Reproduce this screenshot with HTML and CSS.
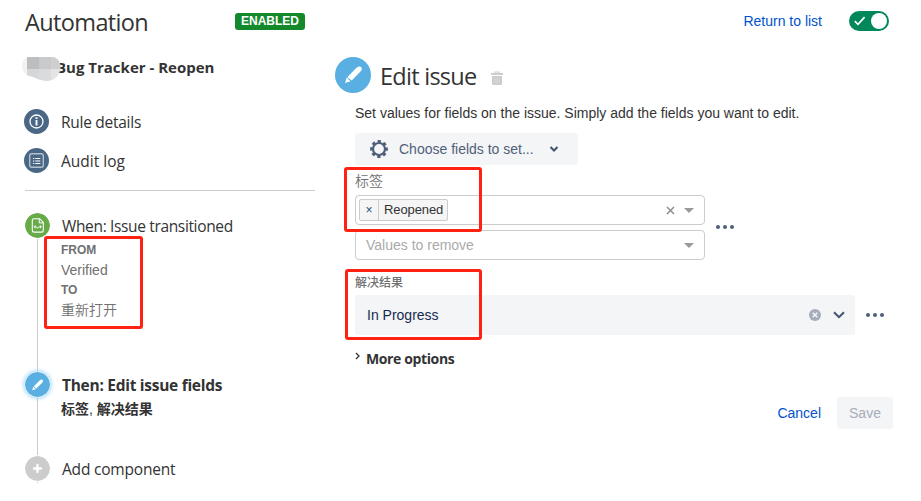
FILE: index.html
```html
<!DOCTYPE html>
<html lang="en">
<head>
<meta charset="utf-8">
<title>Automation</title>
<link rel="stylesheet" href="styles.css">
</head>
<body>
<div class="page">
  <header class="topbar">
    <h1 class="title">Automation</h1>
    <span class="badge">ENABLED</span>
    <a class="link return">Return to list</a>
    <span class="toggle">
      <svg width="14" height="12" viewBox="0 0 14 12"><path d="M1.8 6.2 5 9.3 11.6 2.2" fill="none" stroke="#fff" stroke-width="1.7"/></svg>
      <span class="knob"></span>
    </span>
  </header>
  <div class="columns">
    <aside class="sidebar">
      <div class="rule-name">
        <svg class="mosaic" width="39" height="25" viewBox="0 0 39 25">
          <clipPath id="blob"><path d="M6 0H31C36 1 39 5 38.500 12C37 20 31 24 25 24C17 24 14 20 7 19C2 17 0 13 0 9C0 5 2 1 6 0Z"/></clipPath>
          <g clip-path="url(#blob)"><path fill="#f4f2f1" d="M0 0h5v25H0z"/><path fill="#bdbec0" d="M5 0h12v12H5z"/><path fill="#c9cacb" d="M17 0h12v12H17z"/><path fill="#cfcfcf" d="M29 0h10v12H29z"/><path fill="#d5d6d8" d="M5 12h12v13H5z"/><path fill="#dadbdd" d="M17 12h12v13H17z"/><path fill="#e5e4e4" d="M29 12h10v13H29z"/></g>
        </svg>
        <span class="rule-text">Bug Tracker - Reopen</span>
      </div>
      <div class="nav">
        <div class="nav-item">
          <svg width="25" height="25" viewBox="0 0 25 25"><circle cx="12.500" cy="12.500" r="12.500" fill="#4a6785"/><circle cx="12.500" cy="12.500" r="6.500" fill="none" stroke="#fff" stroke-width="1.300"/><path d="M12.500 8.300v1.700M12.500 11v5.500" stroke="#fff" stroke-width="1.900"/></svg>
          <span class="t-rule">Rule details</span>
        </div>
        <div class="nav-item">
          <svg width="25" height="25" viewBox="0 0 25 25"><circle cx="12.500" cy="12.500" r="12.500" fill="#4a6785"/><rect x="5.700" y="5.700" width="13.600" height="13.600" rx="2" fill="none" stroke="#b5c1cd" stroke-width="1.400"/><path d="M9 10.500h1.300M9 13h1.300M9 15.500h1.300M11.300 10.500h5M11.300 13h5M11.300 15.500h5" stroke="#fff" stroke-width="1.100"/></svg>
          <span class="t-audit">Audit log</span>
        </div>
      </div>
      <div class="timeline">
        <div class="step step-when">
          <div class="rail"><svg class="node" width="25" height="25" viewBox="0 0 25 25"><circle cx="12.500" cy="12.500" r="12.500" fill="#67ab49"/><path d="M9 5.700h5.600l3.700 3.700v8a1.700 1.700 0 0 1-1.700 1.700H9a1.700 1.700 0 0 1-1.700-1.700v-10A1.700 1.700 0 0 1 9 5.700Z" fill="none" stroke="#fff" stroke-width="1.100"/><path d="M14.200 6v3.900H18" fill="none" stroke="#fff" stroke-width="1"/><path d="m8.600 13.800 2-1.700v3.400ZM16.900 13.800l-2-1.700v3.400Z" fill="#fff"/><path d="m10.500 13.800 1 .3.900 1.200.9-1.200 1.700-.3" fill="none" stroke="#fff" stroke-width=".9"/></svg></div>
          <div class="body">
            <div class="heading t-when">When: Issue transitioned</div>
            <div class="details"><b>FROM</b><span>Verified</span><b>TO</b><span class="cjk">重新打开</span></div>
          </div>
        </div>
        <div class="step step-then">
          <div class="rail"><svg class="node glow" width="25" height="25" viewBox="0 0 25 25"><circle cx="12.500" cy="12.500" r="12.500" fill="#59afe1"/><path d="m8.900 14.300 6-6c.9-.9 2-.9 2.700-.3s.5 1.700-.2 2.500l-6.300 6.300Z" fill="#fff"/><path d="m8.300 14.700-1.100 3.600 3.500-1Z" fill="#fff"/></svg></div>
          <div class="body">
            <div class="heading strong t-then">Then: Edit issue fields</div>
            <div class="fields"><b>标签</b>, <b>解决结果</b></div>
          </div>
        </div>
        <div class="step step-add">
          <div class="rail"><svg class="node" width="25" height="25" viewBox="0 0 25 25"><circle cx="12.500" cy="12.500" r="12.500" fill="#ccc"/><path d="M12.500 9v7M9 12.500h7" stroke="#fff" stroke-width="2.300" stroke-linecap="round"/></svg></div>
          <div class="body"><div class="heading t-add">Add component</div></div>
        </div>
      </div>
    </aside>
    <main class="main">
      <div class="edit-head">
        <svg width="36" height="36" viewBox="0 0 36 36"><circle cx="18" cy="18" r="18" fill="#59afe1"/><path d="m12.300 20.300 8.900-9.300c1.500-1.600 3.500-2 4.800-1s1 2.900-.3 4.300l-9 9.200Z" fill="#fff"/><path d="m11.600 20.400-1.500 5.500 5.400-1.600Z" fill="#fff"/></svg>
        <h2 class="t-edit">Edit issue</h2>
        <svg class="trash" width="12" height="14" viewBox="0 0 12 14"><path d="M3.500 2V.5h5V2H12v2H0V2Zm1 0h3v-.6h-3ZM1 5h10v7.500A1.500 1.500 0 0 1 9.500 14h-7A1.500 1.500 0 0 1 1 12.500Z" fill="#ccc" fill-rule="evenodd"/><path d="M4 6.500v6M6 6.500v6M8 6.500v6" stroke="#dedede" stroke-width=".7"/></svg>
      </div>
      <div class="form">
        <p class="intro">Set values for fields on the issue. Simply add the fields you want to edit.</p>
        <div class="choose">
          <svg width="18" height="18" viewBox="0 0 18 18"><circle cx="9" cy="9" r="7.500" fill="none" stroke="#505f79" stroke-width="2.800" stroke-dasharray="3.200 2.690" transform="rotate(-12 9 9)"/><circle cx="9" cy="9" r="6" fill="none" stroke="#505f79" stroke-width="2.200"/></svg>
          <span>Choose fields to set...</span>
          <svg class="chev" width="10" height="6" viewBox="0 0 10 6"><path d="m1.500 1 3.500 3.500L8.500 1" fill="none" stroke="#42526e" stroke-width="2"/></svg>
        </div>
        <div class="label cjk">标签</div>
        <div class="row labels-row">
          <div class="selects">
            <div class="select">
              <div class="tag"><span class="tag-x">×</span><span class="tag-name">Reopened</span></div>
              <svg class="clear" width="9" height="9" viewBox="0 0 9 9"><path d="m1 1 7 7M8 1 1 8" stroke="#8d8d8d" stroke-width="1.500"/></svg>
              <svg width="10" height="5" viewBox="0 0 10 5"><path d="M0 0h10L5 5Z" fill="#999"/></svg>
            </div>
            <div class="select">
              <span class="placeholder">Values to remove</span>
              <svg width="10" height="5" viewBox="0 0 10 5"><path d="M0 0h10L5 5Z" fill="#999"/></svg>
            </div>
          </div>
          <svg width="18" height="4" viewBox="0 0 18 4"><g fill="#505f79"><circle cx="2" cy="2" r="2"/><circle cx="9" cy="2" r="2"/><circle cx="16" cy="2" r="2"/></g></svg>
        </div>
        <div class="label small">解决结果</div>
        <div class="row result-row">
          <div class="result">
            <span>In Progress</span>
            <svg width="12" height="12" viewBox="0 0 12 12"><circle cx="6" cy="6" r="6" fill="#a5adba"/><path d="m3.700 3.700 4.600 4.600M8.300 3.700 3.700 8.300" stroke="#f4f5f7" stroke-width="1.600"/></svg>
            <svg class="result-chev" width="12" height="8" viewBox="0 0 12 8"><path d="m1 1.200 5 5 5-5" fill="none" stroke="#42526e" stroke-width="2"/></svg>
          </div>
          <svg width="18" height="4" viewBox="0 0 18 4"><g fill="#505f79"><circle cx="2" cy="2" r="2"/><circle cx="9" cy="2" r="2"/><circle cx="16" cy="2" r="2"/></g></svg>
        </div>
        <div class="more"><svg width="5" height="8" viewBox="0 0 5 8"><path d="m1 1 3 3-3 3" fill="none" stroke="#333" stroke-width="1.300"/></svg><span class="t-more">More options</span></div>
        <div class="actions"><a class="link">Cancel</a><span class="save">Save</span></div>
      </div>
    </main>
  </div>
  <div class="mark mark-status"></div>
  <div class="mark mark-label"></div>
  <div class="mark mark-result"></div>
</div>
</body>
</html>
```
FILE: styles.css
```css
* { box-sizing: border-box; }
body {
  margin: 0;
  background: #fff;
  color: #333;
  font: 14px/20px "Liberation Sans", "Noto Sans CJK SC", sans-serif;
}
svg { display: block; flex: none; }
span, a, h1, h2 { white-space: nowrap; }
h1, h2, p { margin: 0; }
.page { position: relative; width: 921px; height: 501px; overflow: hidden; }
.topbar { display: flex; align-items: center; height: 45px; padding: 0 32px 3px 25px; }
.title, .rule-name, .nav, .heading, h2, .more { font-family: "Open Sans", sans-serif; }
.title { width: 210px; padding-top: 2px; font-size: 23.500px; font-weight: 400; line-height: 32px; letter-spacing: -.63px; }
.badge { width: 70px; height: 17px; border-radius: 3px; background: #14892c; color: #fff; font-size: 12px; font-weight: 700; line-height: 16px; text-align: center; }
.link { color: #0052cc; }
.return { margin-left: auto; }
.toggle { display: flex; align-items: center; justify-content: space-between; width: 40px; height: 20px; margin-left: 27px; padding: 0 2px 0 4px; border-radius: 10px; background: #00875a; }
.knob { width: 16px; height: 16px; border-radius: 50%; background: #fff; }
.columns { display: flex; }
.sidebar { width: 315px; }
.rule-name { display: flex; align-items: center; height: 46px; padding-left: 22px; font-size: 15px; font-weight: 700; }
.mosaic { z-index: 1; margin-top: 3px; }
.rule-text { margin: -2px 0 0 -5px; }
.nav { height: 100px; margin-left: 25px; padding: 18px 0 0; border-bottom: 1px solid #ccc; font-size: 15.500px; }
.nav-item { display: flex; align-items: center; gap: 12px; height: 25px; margin: 0 0 14px -1px; }
.nav-item span { padding-top: 1px; }
.t-rule { letter-spacing: -.27px; }
.timeline { padding: 21px 0 0 25px; }
.step { display: flex; }
.step-when { height: 159px; }
.step-then { height: 84px; }
.step-add { height: 28px; }
.rail { width: 25px; flex: none; background: linear-gradient(#ccc, #ccc) 12px 0 / 1px 100% no-repeat; }
.node { box-sizing: content-box; border: 1px solid #fff; margin: 0 -1px; border-radius: 50%; background: #fff; }
.glow { border-color: #d5ecf9; box-shadow: 0 0 4px #8cccf0; }
.body { padding-left: 12px; }
.heading { height: 25px; padding-top: 3px; font-size: 15.500px; line-height: 22px; white-space: nowrap; }
.strong { font-weight: 700; }
.t-when { letter-spacing: -.35px; }
.t-then { letter-spacing: -.28px; }
.t-add { letter-spacing: -.2px; }
.details { display: flex; flex-direction: column; margin: 3px 0 0 -1px; color: #707070; }
.details b { font-size: 12px; }
.cjk { font-family: "Noto Sans CJK SC", sans-serif; font-weight: 350; }
.details .cjk { margin-top: -1px; }
.fields { margin: 3px 0 0 -1px; }
.main { width: 606px; }
.edit-head { display: flex; align-items: center; height: 36px; margin: 12px 0 0 20px; }
h2 { width: 106px; margin-left: 9px; padding-top: 1px; font-size: 23.500px; font-weight: 400; line-height: 32px; letter-spacing: -.73px; }
.trash { margin: 6px 0 0 5px; }
.form { margin-left: 40px; width: 538px; }
.intro { margin-top: 10px; }
.choose { display: flex; align-items: center; width: 223px; height: 32px; margin-top: 10px; padding: 0 19px 0 15px; border-radius: 3px; background: #f4f5f7; color: #505f79; }
.choose span { margin-left: 11px; }
.chev { margin-left: auto; }
.label { height: 20px; margin-top: 5px; color: #707070; }
.row { display: flex; align-items: center; gap: 11px; }
.labels-row { margin-top: 5px; }
.labels-row > svg { margin-top: -1px; }
.selects { display: flex; flex-direction: column; gap: 5px; width: 350px; }
.select { display: flex; align-items: center; justify-content: space-between; height: 30px; padding: 0 10px 0 3px; border: 1px solid #ccc; border-radius: 4px; }
.tag { display: flex; width: 89px; height: 22px; border: 1px solid #ccc; border-radius: 2px; background: #f5f5f5; font-size: 13px; letter-spacing: -.1px; }
.tag-x { width: 19px; border-right: 1px solid #ccc; color: #205081; text-align: center; font-size: 12px; }
.tag-name { padding-left: 5px; }
.clear { margin: 1px 9px 0 auto; }
.placeholder { padding-left: 7px; color: #aaa; }
.label.small { margin-top: 13px; font-size: 12px; font-weight: 500; }
.result-row { margin-top: 2px; }
.result { display: flex; align-items: center; width: 500px; height: 40px; padding: 0 10px 0 12px; border-radius: 3px; background: #f4f5f7; color: #172b4d; }
.result span { margin-right: auto; }
.result-chev { margin-left: 12px; }
.more { display: flex; gap: 6px; margin-top: 14px; font-weight: 700; }
.more svg { margin-top: 3px; }
.t-more { letter-spacing: -.38px; }
.actions { display: flex; align-items: center; justify-content: flex-end; height: 32px; margin-top: 28px; }
.save { width: 56px; height: 32px; margin-left: 16px; border-radius: 3px; background: #f4f5f7; color: #a5adba; line-height: 32px; text-align: center; }
.mark { position: absolute; border: 3px solid #ff2111; border-radius: 3px; }
.mark-status { left: 44px; top: 236px; width: 99px; height: 93px; }
.mark-label { left: 344px; top: 167px; width: 138px; height: 65px; }
.mark-result { left: 345px; top: 269px; width: 137px; height: 71px; }
```
